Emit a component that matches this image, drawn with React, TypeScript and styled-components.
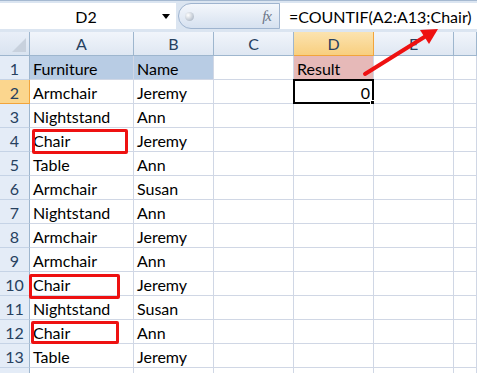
import React from 'react'
import styled, { createGlobalStyle } from 'styled-components'

const GlobalStyle = createGlobalStyle`
    html, body {
        margin: 0;
        padding: 0;
        background: #ffffff;
    }
    body {
        width: 477px;
        height: 373px;
        overflow: hidden;
        font-family: Lato, "Open Sans", "Liberation Sans", sans-serif;
    }
`

const Sheet = styled.div`
    position: relative;
    width: 477px;
    height: 373px;
    overflow: hidden;
    background: #ffffff;
`

const FormulaBar = styled.div`
    display: flex;
    align-items: stretch;
    height: 32px;
    padding: 2px 0 3px 0;
    box-sizing: border-box;
    background: #dbe5f1;
    border-top: 1px solid #a5b9d1;
`

const NameBox = styled.div`
    display: flex;
    align-items: center;
    width: 176px;
    background: #ffffff;
    font-size: 16px;
    color: #000;
`

const NameText = styled.span`
    flex: 1;
    text-align: center;
    padding-left: 10px;
`

const DropArrow = styled.span`
    width: 0;
    height: 0;
    margin-right: 6px;
    border-left: 4px solid transparent;
    border-right: 4px solid transparent;
    border-top: 5px solid #000;
`

const FxPill = styled.div`
    position: relative;
    display: flex;
    align-items: center;
    justify-content: flex-end;
    width: 102px;
    margin-left: 2px;
    padding-right: 8px;
    box-sizing: border-box;
    border: 1px solid #9fb4cf;
    border-radius: 13px 0 0 13px;
    background: linear-gradient(#f4f7fc, #d6e1f0);
`

const Knob = styled.span`
    position: absolute;
    left: 6px;
    top: 8px;
    width: 9px;
    height: 9px;
    border-radius: 50%;
    background: radial-gradient(circle at 35% 35%, #ffffff, #9aa7b8);
`

const FxLabel = styled.span`
    font-family: "Liberation Serif", serif;
    font-style: italic;
    font-size: 15px;
    color: #6b7688;
    letter-spacing: -1px;
`

const FormulaInput = styled.div`
    flex: 1;
    display: flex;
    align-items: center;
    padding-left: 9px;
    background: #ffffff;
    font-size: 16px;
    color: #000;
    white-space: nowrap;
`

const Grid = styled.div`
    display: grid;
    grid-template-columns: 30px 104px 80px 80px 80px 80px 1fr;
    grid-auto-rows: 24px;
`

const Corner = styled.div`
    position: relative;
    background: linear-gradient(#e9eff8, #d9e3f0);
    border-right: 1px solid #9eb6ce;
    border-bottom: 1px solid #9eb6ce;
    box-sizing: border-box;
    &::after {
        content: '';
        position: absolute;
        right: 3px;
        bottom: 3px;
        width: 0;
        height: 0;
        border-left: 14px solid transparent;
        border-bottom: 14px solid #c8d1dd;
    }
`

const ColHead = styled.div<{ active?: boolean }>`
    display: flex;
    align-items: center;
    justify-content: center;
    box-sizing: border-box;
    font-size: 16px;
    color: #27415f;
    background: ${p => p.active
        ? 'linear-gradient(#fbe3b0, #f8cf7f)'
        : 'linear-gradient(#f1f5fb, #dfe7f2)'};
    border-right: 1px solid ${p => p.active ? '#f2a43b' : '#9eb6ce'};
    border-bottom: 1px solid ${p => p.active ? '#f2a43b' : '#9eb6ce'};
`

const RowHead = styled.div<{ active?: boolean }>`
    display: flex;
    align-items: center;
    justify-content: center;
    padding-top: 1px;
    box-sizing: border-box;
    font-size: 16px;
    color: #27415f;
    background: ${p => p.active ? '#fbd68e' : '#e4ecf7'};
    border-right: 1px solid ${p => p.active ? '#f2a43b' : '#9eb6ce'};
    border-bottom: 1px solid ${p => p.active ? '#f2a43b' : '#c5d3e6'};
`

const Cell = styled.div<{ fill?: string; right?: boolean; selected?: boolean }>`
    position: relative;
    display: flex;
    align-items: center;
    justify-content: ${p => p.right ? 'flex-end' : 'flex-start'};
    padding: 1px 3px 0 3px;
    box-sizing: border-box;
    font-size: 16px;
    color: #000;
    white-space: nowrap;
    background: ${p => p.fill || '#ffffff'};
    border-right: 1px solid #d0d7e5;
    border-bottom: 1px solid #d0d7e5;
    ${p => p.selected && `
        &::before {
            content: '';
            position: absolute;
            left: -1px;
            top: -1px;
            right: -1px;
            bottom: -1px;
            border: 2px solid #000;
            pointer-events: none;
        }
        &::after {
            content: '';
            position: absolute;
            right: -4px;
            bottom: -4px;
            width: 5px;
            height: 5px;
            background: #000;
            border: 1px solid #fff;
        }
    `}
`

const Mark = styled.div`
    position: absolute;
    border: 3px solid #ee1111;
    border-radius: 2px;
    box-sizing: border-box;
    pointer-events: none;
`

const ArrowSvg = styled.svg`
    position: absolute;
    left: 0;
    top: 0;
    pointer-events: none;
`

const HEADER_FILL = '#b8cce4'
const RESULT_FILL = '#e6b9b8'

const rows: [string, string][] = [
    ['Armchair', 'Jeremy'],
    ['Nightstand', 'Ann'],
    ['Chair', 'Jeremy'],
    ['Table', 'Ann'],
    ['Armchair', 'Susan'],
    ['Nightstand', 'Ann'],
    ['Armchair', 'Jeremy'],
    ['Armchair', 'Ann'],
    ['Chair', 'Jeremy'],
    ['Nightstand', 'Susan'],
    ['Chair', 'Ann'],
    ['Table', 'Jeremy'],
]

const App = () => {
    return (
        <>
            <GlobalStyle />
            <Sheet>
                <FormulaBar>
                    <NameBox>
                        <NameText>D2</NameText>
                        <DropArrow />
                    </NameBox>
                    <FxPill>
                        <Knob />
                        <FxLabel>fx</FxLabel>
                    </FxPill>
                    <FormulaInput>=COUNTIF(A2:A13;Chair)</FormulaInput>
                </FormulaBar>

                <Grid>
                    <Corner />
                    <ColHead>A</ColHead>
                    <ColHead>B</ColHead>
                    <ColHead>C</ColHead>
                    <ColHead active>D</ColHead>
                    <ColHead>E</ColHead>
                    <ColHead></ColHead>

                    <RowHead>1</RowHead>
                    <Cell fill={HEADER_FILL}>Furniture</Cell>
                    <Cell fill={HEADER_FILL}>Name</Cell>
                    <Cell />
                    <Cell fill={RESULT_FILL}>Result</Cell>
                    <Cell />
                    <Cell />

                    {rows.map(([furniture, name], i) => (
                        <React.Fragment key={i}>
                            <RowHead active={i === 0}>{i + 2}</RowHead>
                            <Cell>{furniture}</Cell>
                            <Cell>{name}</Cell>
                            <Cell />
                            {i === 0 ? <Cell right selected>0</Cell> : <Cell />}
                            <Cell />
                            <Cell />
                        </React.Fragment>
                    ))}

                    {/* row 14 is only a sliver at the bottom edge */}
                    <RowHead />
                    <Cell />
                    <Cell />
                    <Cell />
                    <Cell />
                    <Cell />
                    <Cell />
                </Grid>

                <Mark style={{ left: 32, top: 129, width: 96, height: 25 }} />
                <Mark style={{ left: 29, top: 274, width: 91, height: 25 }} />
                <Mark style={{ left: 31, top: 321, width: 88, height: 23 }} />

                <ArrowSvg width="477" height="373" viewBox="0 0 477 373">
                    <line x1="365" y1="74" x2="426" y2="36" stroke="#ee1111" strokeWidth="4" strokeLinecap="round" />
                    <polygon points="438,29 420,30 429,44" fill="#ee1111" />
                </ArrowSvg>
            </Sheet>
        </>
    )
}

export default App
